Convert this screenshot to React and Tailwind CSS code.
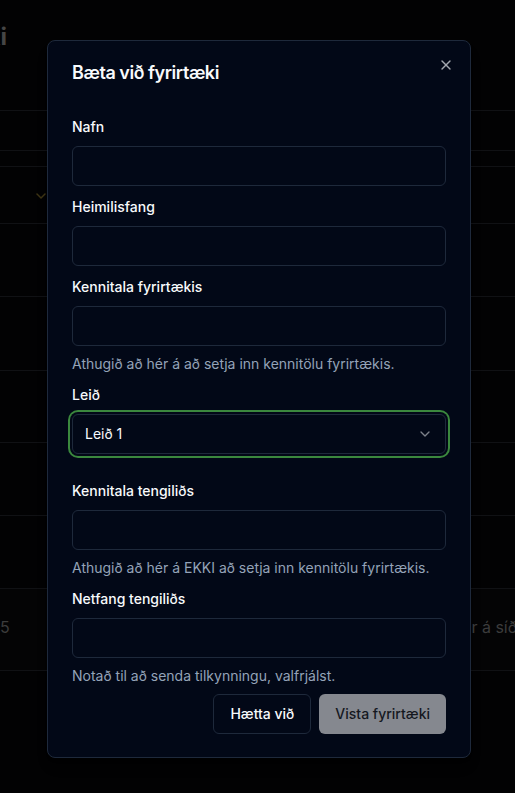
import React from "react";
import { X, ChevronDown } from "lucide-react";

function Field({ label, helper, className = "" }) {
  return (
    <div className={"flex flex-col " + className}>
      <label className="text-sm font-medium leading-none text-[#f8fafc]">{label}</label>
      <input
        className="mt-3 h-10 w-full rounded-md border border-[#1e293b] bg-transparent px-3 text-sm text-[#f8fafc] outline-none"
        type="text"
      />
      {helper && <p className="mt-2 text-sm leading-5 text-[#94a3b8]">{helper}</p>}
    </div>
  );
}

export default function App() {
  const rowBorder = "border-b border-[#101114]";
  return (
    <div className="relative min-h-screen w-[515px] h-[793px] overflow-hidden bg-[#020203] font-['Inter',sans-serif] text-[#3c3c3c]">
      {/* dimmed page behind overlay */}
      <div>
        <div className={"h-[111px] pt-[21px] " + rowBorder}>
          <div className="-ml-[200px] w-[207px] text-right text-2xl font-bold leading-8 text-[#454545] whitespace-nowrap">
            Fyrirtæki
          </div>
        </div>
        <div className={"h-[40px] " + rowBorder} />
        <div className={"h-[16px] " + rowBorder} />
        <div className={"flex h-[57px] items-center pl-[36px] " + rowBorder}>
          <svg width="10" height="6" viewBox="0 0 10 6" fill="none" className="mt-[2px]">
            <path d="M1 1l4 4 4-4" stroke="#3d3414" strokeWidth="1.5" strokeLinecap="round" strokeLinejoin="round" />
          </svg>
        </div>
        <div className={"h-[73px] " + rowBorder} />
        <div className={"h-[74px] " + rowBorder} />
        <div className={"h-[72px] " + rowBorder} />
        <div className={"h-[73px] " + rowBorder} />
        <div className={"h-[73px] " + rowBorder} />
        <div className={"flex h-[82px] items-center bg-[#040405] text-base " + rowBorder}>
          <span className="w-[439px] shrink-0 pb-[6px]">5</span>
          <span className="whitespace-nowrap pb-[6px]">Raðir á síðu</span>
        </div>
      </div>

      {/* dialog */}
      <div className="absolute left-[47px] top-[40px] w-[424px] rounded-lg border border-[#1e293b] bg-[#020817] px-6 pt-[23px] pb-[23px] shadow-lg">
        <h2 className="text-lg font-semibold leading-none tracking-tight text-[#f8fafc]">Bæta við fyrirtæki</h2>
        <button className="absolute right-4 top-4 text-[#a3a8b0]">
          <X size={16} strokeWidth={2} />
        </button>

        <form className="mt-[38px] flex flex-col">
          <Field label="Nafn" />
          <Field label="Heimilisfang" className="mt-[14px]" />
          <Field
            label="Kennitala fyrirtækis"
            helper="Athugið að hér á að setja inn kennitölu fyrirtækis."
            className="mt-[14px]"
          />
          <div className="mt-[14px] flex flex-col">
            <label className="text-sm font-medium leading-none text-[#f8fafc]">Leið</label>
            <div className="mt-3 flex h-10 w-full items-center justify-between rounded-md border border-[#1e293b] bg-[#020817] px-3 text-sm text-[#f8fafc] ring-2 ring-[#3b883e] ring-offset-2 ring-offset-[#020817]">
              <span>Leið 1</span>
              <ChevronDown size={16} className="text-[#f8fafc] opacity-50" />
            </div>
          </div>
          <Field
            label="Kennitala tengiliðs"
            helper="Athugið að hér á EKKI að setja inn kennitölu fyrirtækis."
            className="mt-[30px]"
          />
          <Field
            label="Netfang tengiliðs"
            helper="Notað til að senda tilkynningu, valfrjálst."
            className="mt-[14px]"
          />
          <div className="mt-2 flex justify-end gap-2">
            <button
              type="button"
              className="h-10 rounded-md border border-[#1e293b] bg-[#020817] px-4 text-sm font-medium text-[#f8fafc]"
            >
              Hætta við
            </button>
            <button
              type="button"
              className="h-10 rounded-md bg-[#85888f] px-4 text-sm font-medium text-[#15181f]"
            >
              Vista fyrirtæki
            </button>
          </div>
        </form>
      </div>
    </div>
  );
}
